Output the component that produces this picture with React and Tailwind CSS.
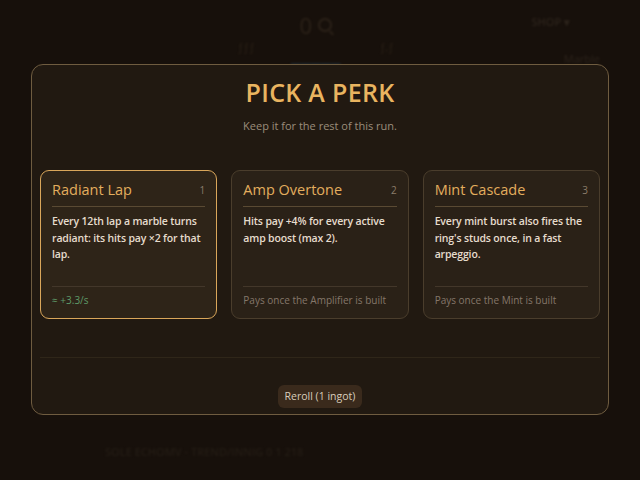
import React from "react";

const cards = [
  {
    n: 1,
    title: "Radiant Lap",
    desc: "Every 12th lap a marble turns radiant: its hits pay ×2 for that lap.",
    foot: "≈ +3.3/s",
    active: true,
  },
  {
    n: 2,
    title: "Amp Overtone",
    desc: "Hits pay +4% for every active amp boost (max 2).",
    foot: "Pays once the Amplifier is built",
  },
  {
    n: 3,
    title: "Mint Cascade",
    desc: "Every mint burst also fires the ring's studs once, in a fast arpeggio.",
    foot: "Pays once the Mint is built",
  },
];

function Card({ c }) {
  return (
    <div
      className={
        "flex flex-col h-[149px] rounded-[9px] px-[11px] " +
        (c.active
          ? "border-[1.5px] border-[#d9a65a] bg-[#2e2418]"
          : "border border-[#4a3d2c] bg-[#2a2117]")
      }
    >
      <div className="flex items-center justify-between pt-[9px] pb-[6px] border-b border-[#5a4a33]">
        <span className="text-[14.5px] leading-[20px] font-medium text-[#e3ae5e]">{c.title}</span>
        <span className="text-[10px] leading-[20px] text-[#8a7c6a]">{c.n}</span>
      </div>
      <p className="flex-1 mt-[6px] text-[10.5px] leading-[16.5px] font-semibold tracking-[-0.15px] text-[#e6dccd]">
        {c.desc}
      </p>
      <div
        className={
          "border-t border-[#43372a] pt-[5px] pb-[10px] text-[10px] leading-[16px] font-medium " +
          (c.active ? "text-[#5e9a68]" : "text-[#85776a]")
        }
      >
        {c.foot}
      </div>
    </div>
  );
}

export default function App() {
  return (
    <div
      className="relative w-[640px] h-[480px] overflow-hidden bg-[#17100b]"
      style={{ fontFamily: '"Open Sans", "Noto Sans", sans-serif' }}
    >
      {/* faded background game UI */}
      <div className="blur-[1.2px] opacity-60">
        <div className="flex items-start justify-between px-[20px] pt-[10px] h-[62px]">
          <div className="w-[120px]" />
          <div className="flex flex-col items-center mr-[40px]">
            <div className="flex items-center gap-[6px]">
              <span className="text-[22px] leading-[30px] text-[#3a2e22]">0</span>
              <span className="relative w-[14px] h-[14px] rounded-full border-2 border-[#3a2e22]">
                <span className="absolute right-[-4px] bottom-[-4px] w-[5px] h-[2px] rotate-45 bg-[#3a2e22]" />
              </span>
            </div>
            <div className="flex gap-[125px] text-[10px] text-[#3a2e20]">
              <span>ƒƒƒ</span>
              <span>ƒ,ƒ</span>
            </div>
            <span className="text-[10px] text-[#1f3140]">▬▬▬▬▬</span>
          </div>
          <div className="flex flex-col items-end">
            <span className="text-[11px] font-semibold text-[#3a3026] mr-[50px] mt-[4px]">SHOP ▾</span>
            <span className="text-[11px] text-[#3a3026] mt-[20px] mr-[20px]">Marble</span>
          </div>
        </div>
        <div className="h-[382px]" />
        <div className="pl-[105px] text-[11px] text-[#2c241b] font-semibold">
          SOLE ECHOMV - TREND/INNIG 0 1 218
        </div>
      </div>

      {/* modal overlay */}
      <div className="absolute left-[31px] top-[64px] w-[578px] h-[351px] rounded-[12px] border-[1.5px] border-[#6f5c40] bg-[#211911] px-[8px] flex flex-col">
        <h1 className="pt-[10px] text-center text-[25px] leading-[34px] font-semibold tracking-[0.3px] text-[#e9b460]">
          PICK A PERK
        </h1>
        <p className="mt-[9px] text-center text-[11px] leading-[16px] text-[#9b8d7b]">
          Keep it for the rest of this run.
        </p>
        <div className="mt-[36px] grid grid-cols-3 gap-[14px]">
          {cards.map((c) => (
            <Card key={c.n} c={c} />
          ))}
        </div>
        <div className="mt-[38px] border-t border-[#2f2619]" />
        <div className="mt-[27px] flex justify-center">
          <button className="h-[23px] px-[7px] rounded-[6px] bg-[#3a2a1c] text-[10.5px] font-medium text-[#d9cdbb]">
            Reroll (1 ingot)
          </button>
        </div>
      </div>
    </div>
  );
}
